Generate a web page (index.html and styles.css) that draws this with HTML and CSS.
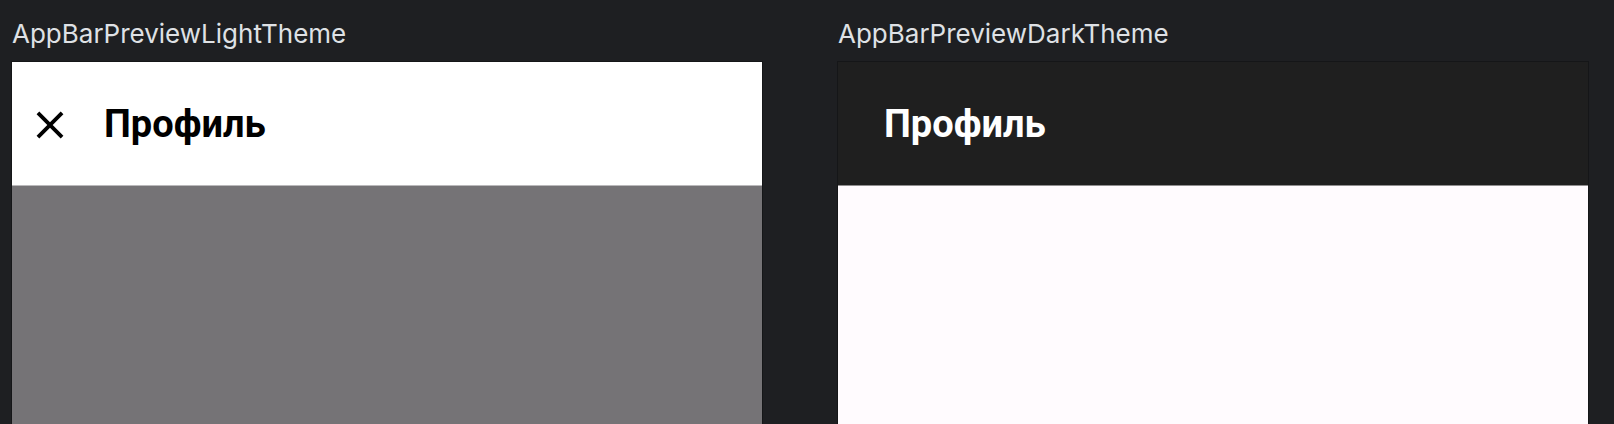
FILE: index.html
```html
<!DOCTYPE html>
<html lang="ru">
<head>
<meta charset="utf-8">
<title>AppBar previews</title>
<link rel="stylesheet" href="styles.css">
</head>
<body>
<div class="previews">
  <section class="preview">
    <div class="preview-label">AppBarPreviewLightTheme</div>
    <div class="device device-light">
      <header class="appbar appbar-light">
        <span class="nav-icon">
          <svg width="46" height="46" viewBox="0 0 24 24" aria-hidden="true"><path fill="#000" d="M19 6.41L17.59 5 12 10.59 6.41 5 5 6.41 10.59 12 5 17.59 6.41 19 12 13.41 17.59 19 19 17.59 13.41 12z"/></svg>
        </span>
        <h1 class="appbar-title">Профиль</h1>
      </header>
      <div class="content content-scrim"></div>
    </div>
  </section>
  <section class="preview">
    <div class="preview-label">AppBarPreviewDarkTheme</div>
    <div class="device device-dark">
      <header class="appbar appbar-dark">
        <h1 class="appbar-title">Профиль</h1>
      </header>
      <div class="content content-light"></div>
    </div>
  </section>
</div>
</body>
</html>
```

FILE: styles.css
```css
html, body {
  margin: 0;
  padding: 0;
  height: 100%;
  background: #1e1f22;
  overflow: hidden;
}

.previews {
  display: flex;
  gap: 76px;
  padding: 0 12px;
}

.preview {
  display: flex;
  flex-direction: column;
  width: 750px;
}

.preview-label {
  font-family: "Inter", "Noto Sans", sans-serif;
  font-size: 26px;
  line-height: 32px;
  color: #dfe1e5;
  padding-top: 18px;
  margin-bottom: 12px;
  white-space: nowrap;
}

.device {
  display: flex;
  flex-direction: column;
  height: 362px;
  box-shadow: 0 0 0 1px #151618;
}

.appbar {
  display: flex;
  align-items: center;
  height: 121px;
  padding-top: 2px;
  box-sizing: content-box;
}

.appbar-light {
  background: #ffffff;
  color: #000000;
  padding-left: 15px;
  border-bottom: 1px solid #bab9bb;
}

.appbar-dark {
  background: #1f1f1f;
  color: #ffffff;
  padding-left: 46px;
  border-bottom: 1px solid #8f8d8e;
}

.nav-icon {
  display: flex;
  width: 46px;
  height: 46px;
  margin-right: 31px;
}

.appbar-title {
  margin: 0;
  font-family: "Roboto", "Noto Sans", sans-serif;
  font-weight: 700;
  font-size: 38px;
  line-height: 45px;
}

.content {
  flex: 1;
}

.content-scrim {
  background: #757376;
}

.content-light {
  background: #fffbfe;
}
```
